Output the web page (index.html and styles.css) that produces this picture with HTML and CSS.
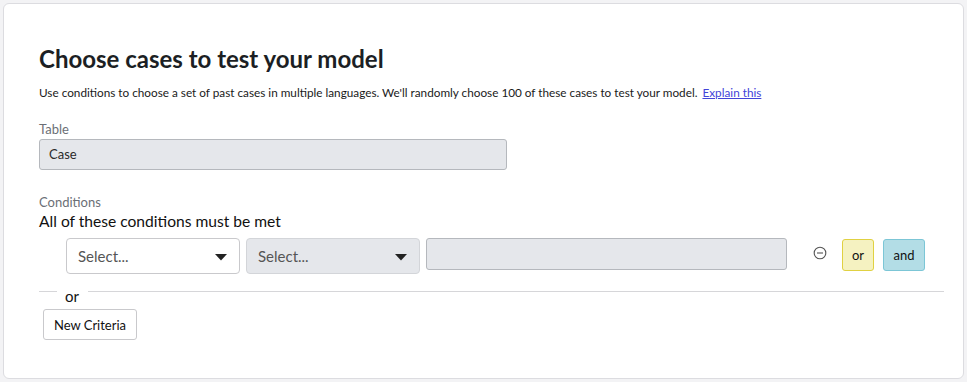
FILE: index.html
```html
<!DOCTYPE html>
<html>
<head>
<meta charset="utf-8">
<link rel="stylesheet" href="styles.css">
</head>
<body>
<div class="card">
  <h1 class="title">Choose cases to test your model</h1>
  <p class="desc">Use conditions to choose a set of past cases in multiple languages. We'll randomly choose 100 of these cases to test your model. <a href="#" class="link">Explain this</a></p>

  <div class="label">Table</div>
  <div class="table-input">Case</div>

  <div class="label cond-label">Conditions</div>
  <div class="rule">All of these conditions must be met</div>

  <div class="cond-row">
    <div class="select white">
      <span>Select...</span>
      <svg class="caret" width="12" height="8" viewBox="0 0 12 8"><path d="M0 1h12L6 7.5z" fill="#222"/></svg>
    </div>
    <div class="select gray">
      <span>Select...</span>
      <svg class="caret" width="12" height="8" viewBox="0 0 12 8"><path d="M0 1h12L6 7.5z" fill="#222"/></svg>
    </div>
    <div class="value-input"></div>
    <svg class="remove" width="14" height="14" viewBox="0 0 14 14"><circle cx="7" cy="7" r="5.8" fill="none" stroke="#555" stroke-width="1.1"/><path d="M4 7h6" stroke="#555" stroke-width="1.1"/></svg>
    <button class="btn-or">or</button>
    <button class="btn-and">and</button>
  </div>

  <div class="divider">
    <div class="line short"></div>
    <div class="or-text">or</div>
    <div class="line long"></div>
  </div>

  <button class="new-criteria">New Criteria</button>
</div>
</body>
</html>
```

FILE: styles.css
```css
* { box-sizing: border-box; }
html, body { margin: 0; padding: 0; }
body {
  background: #f3f3f5;
  padding: 3px 3px 4px 3px;
  font-family: Lato, "Noto Sans", sans-serif;
  color: #1f2328;
}
.card {
  background: #fff;
  border: 1px solid #dcdce0;
  border-radius: 6px;
  height: 376px;
  padding: 40px 20px 0 35px;
}
.title {
  margin: 0;
  font-size: 24px;
  font-weight: 700;
  line-height: 30px;
  color: #1c1f24;
}
.desc {
  margin: 12px 0 0 0;
  font-size: 11.75px;
  line-height: 14px;
  color: #1a1a1a;
}
.link {
  color: #4343d8;
  text-decoration: underline;
  margin-left: 2px;
}
.label {
  margin-top: 21px;
  font-size: 13px;
  line-height: 16px;
  color: #6b6f76;
}
.table-input {
  margin-top: 2px;
  width: 468px;
  height: 31px;
  background: #e5e7eb;
  border: 1px solid #b5b8bd;
  border-radius: 3px;
  font-size: 13px;
  line-height: 29px;
  padding-left: 9px;
  color: #2a2a2a;
}
.cond-label {
  margin-top: 24px;
}
.rule {
  margin-top: 2px;
  font-size: 15.6px;
  line-height: 18px;
  color: #111;
}
.cond-row {
  display: flex;
  align-items: flex-start;
  margin-top: 8px;
  padding-left: 27px;
  height: 36px;
}
.select {
  width: 174px;
  height: 36px;
  border-radius: 4px;
  display: flex;
  align-items: center;
  justify-content: space-between;
  padding: 0 12px 0 11px;
  font-size: 15px;
  color: #555;
  margin-right: 6px;
}
.select.white {
  background: #fff;
  border: 1px solid #c9c9cc;
}
.select.gray {
  background: #e5e7eb;
  border: 1px solid #d3d5d9;
}
.caret { display: block; margin-top: 1px; }
.value-input {
  width: 361px;
  height: 32px;
  background: #e5e7eb;
  border: 1px solid #b5b8bd;
  border-radius: 3px;
}
.remove {
  margin: 8px 0 0 26px;
  display: block;
}
.btn-or, .btn-and {
  font-family: Lato, "Noto Sans", sans-serif;
  font-size: 13px;
  height: 32px;
  margin-top: 1px;
  border-radius: 3px;
  padding: 0;
  color: #111;
}
.btn-or {
  width: 32px;
  margin-left: 15px;
  background: #f5f2c1;
  border: 1px solid #e0d142;
}
.btn-and {
  width: 42px;
  margin-left: 9px;
  background: #b3dde6;
  border: 1px solid #7cc6d6;
}
.divider {
  display: flex;
  align-items: flex-start;
  margin-top: 17px;
  width: 905px;
}
.line {
  height: 1px;
  background: #d6d6d9;
  margin-top: 0;
}
.line.short { width: 18px; }
.line.long { flex: 1; }
.or-text {
  padding: 0 8px;
  width: 31px;
  font-size: 15px;
  line-height: 18px;
  margin-top: -4px;
  color: #111;
}
.new-criteria {
  margin: 4px 0 0 4px;
  height: 31px;
  width: 94px;
  background: #fff;
  border: 1px solid #c9c9cc;
  border-radius: 3px;
  font-family: Lato, "Noto Sans", sans-serif;
  font-size: 13px;
  color: #111;
  padding: 0;
}
```
